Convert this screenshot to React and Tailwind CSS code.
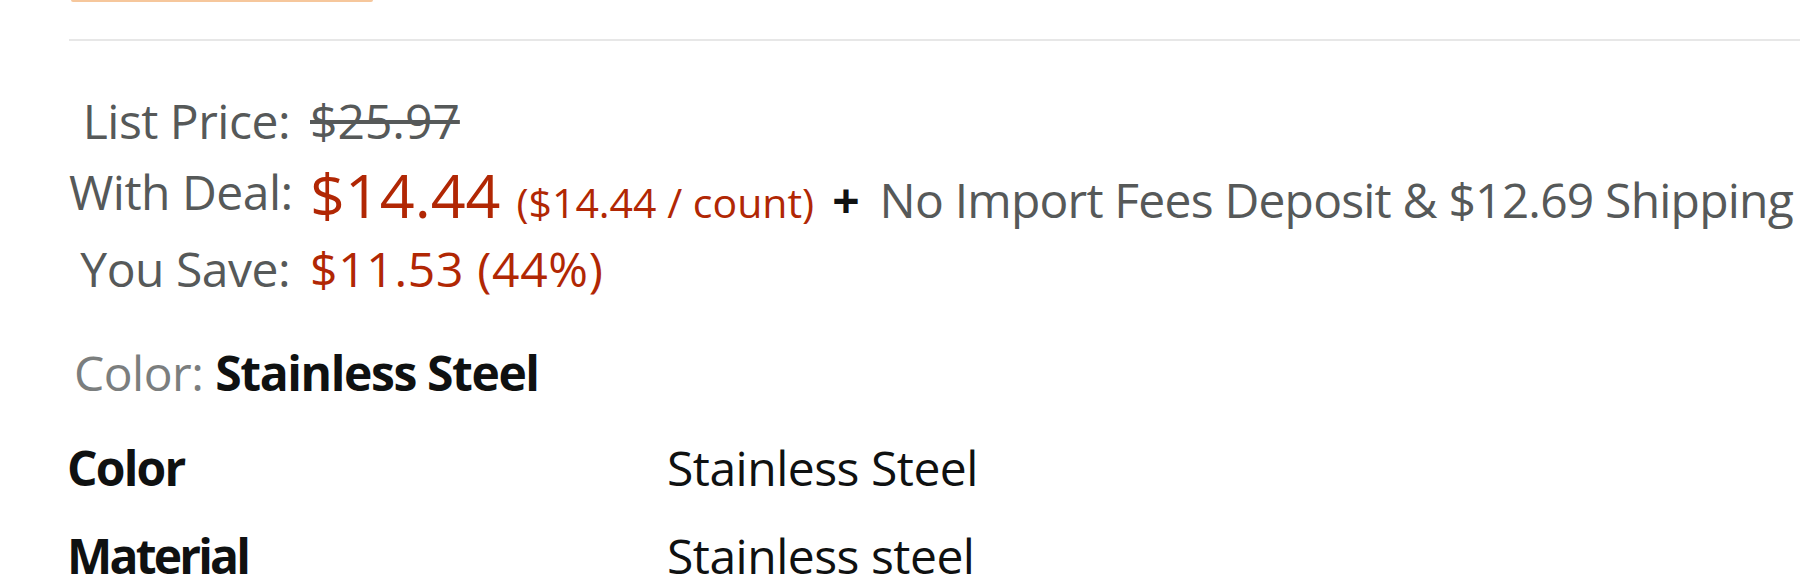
const PriceRow = ({label, children, height}) => {
    return (
        <div className="flex items-start" style={{height}}>
            <div className="w-[221px] shrink-0 text-right whitespace-nowrap text-[#565959] leading-[74px] tracking-[-0.5px]">{label}</div>
            <div className="pl-[20px] flex items-baseline whitespace-nowrap">{children}</div>
        </div>
    )
}

const DetailRow = ({name, value, nameTracking}) => {
    return (
        <div className="flex h-[88px] leading-[88px] text-[#0f1111] whitespace-nowrap">
            <div className={`w-[600px] shrink-0 font-bold ${nameTracking}`}>{name}</div>
            <div className="tracking-[-0.5px]">{value}</div>
        </div>
    )
}

export default function App() {
    return (
        <div className="w-[1800px] h-[576px] overflow-hidden bg-white font-['Open_Sans',sans-serif] text-[48px]">
            {/* bottom edge of the buy button above */}
            <div className="ml-[71px] w-[302px] h-[2px] rounded-b-full bg-[#f6c79c]"></div>

            <div className="ml-[69px] mt-[37px] h-[2px] bg-[#e7e7e7]"></div>

            <div className="ml-[69px] mt-[43px]">
                <PriceRow label="List Price:" height="71px">
                    <span className="leading-[74px] text-[#565959] line-through">$25.97</span>
                </PriceRow>

                <PriceRow label="With Deal:" height="77px">
                    <span className="text-[61px] leading-[80px] text-[#b12704]">$14.44</span>
                    <span className="ml-[16px] text-[41px] text-[#b12704]">($14.44 / count)</span>
                    <span className="ml-[18px] font-bold text-[#0f1111]">+</span>
                    <span className="ml-[20px] text-[#565959] tracking-[-0.8px]">No Import Fees Deposit &amp; $12.69 Shipping to Israel</span>
                </PriceRow>

                <PriceRow label="You Save:" height="74px">
                    <span className="leading-[74px] text-[#b12704] tracking-[0.7px]">$11.53 (44%)</span>
                </PriceRow>
            </div>

            <div className="ml-[74px] mt-[30px] leading-[74px] whitespace-nowrap">
                <span className="text-[#7b7e7e] tracking-[-0.5px]">Color: </span>
                <span className="font-bold text-[#0f1111] tracking-[-1.4px]">Stainless Steel</span>
            </div>

            <div className="ml-[67px] mt-[14px]">
                <DetailRow name="Color" value="Stainless Steel" nameTracking="tracking-[-1.8px]"/>
                <DetailRow name="Material" value="Stainless steel" nameTracking="tracking-[-2.8px]"/>
            </div>
        </div>
    )
}
